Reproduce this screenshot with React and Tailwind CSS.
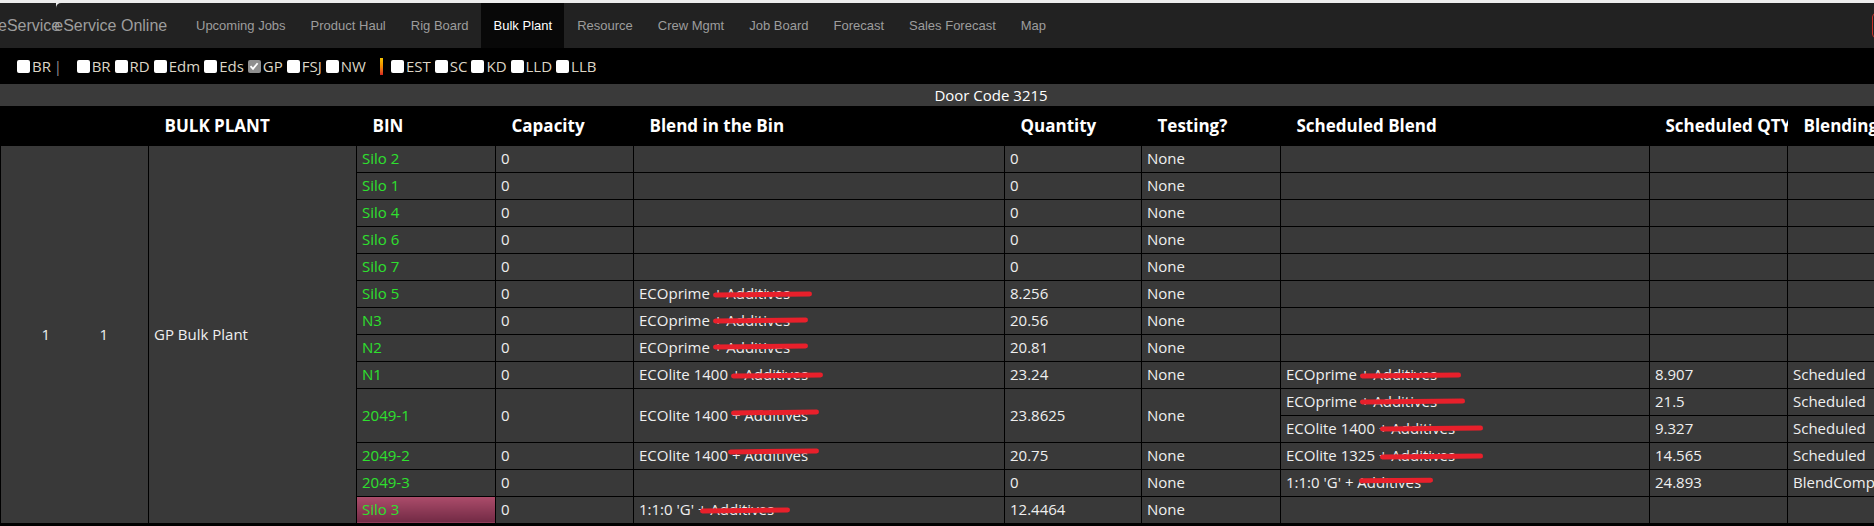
import React from 'react';

const navLinks = ['Upcoming Jobs', 'Product Haul', 'Rig Board', 'Bulk Plant', 'Resource', 'Crew Mgmt', 'Job Board', 'Forecast', 'Sales Forecast', 'Map'];

const leftDistricts = ['BR', 'RD', 'Edm', 'Eds', 'GP', 'FSJ', 'NW'];
const rightDistricts = ['EST', 'SC', 'KD', 'LLD', 'LLB'];

const headers = ['', '', 'BULK PLANT', 'BIN', 'Capacity', 'Blend in the Bin', 'Quantity', 'Testing?', 'Scheduled Blend', 'Scheduled QTY', 'Blending'];
const widths = ['w-[90px]', 'w-[58px]', 'w-[208px]', 'w-[139px]', 'w-[138px]', 'w-[371px]', 'w-[137px]', 'w-[139px]', 'w-[369px]', 'w-[138px]', 'w-[195px]'];

const rows = [
  { bin: 'Silo 2', qty: '0' },
  { bin: 'Silo 1', qty: '0' },
  { bin: 'Silo 4', qty: '0' },
  { bin: 'Silo 6', qty: '0' },
  { bin: 'Silo 7', qty: '0' },
  { bin: 'Silo 5', blend: 'ECOprime', qty: '8.256', bar: 'left-[3px] right-[-22px] top-[calc(50%-1px)]' },
  { bin: 'N3', blend: 'ECOprime', qty: '20.56', bar: 'left-[3px] right-[-18px] top-[calc(50%-2px)]' },
  { bin: 'N2', blend: 'ECOprime', qty: '20.81', bar: 'left-[3px] right-[-18px] top-[calc(50%-3px)]' },
  { bin: 'N1', blend: 'ECOlite 1400', qty: '23.24', bar: 'left-[3px] right-[-15px] top-[calc(50%-1px)]', sched: [{ blend: 'ECOprime', qty: '8.907', status: 'Scheduled', bar: 'left-[3px] right-[-24px] top-[calc(50%-1px)]' }] },
  {
    bin: '2049-1', blend: 'ECOlite 1400', qty: '23.8625', bar: 'left-[3px] right-[-11px] top-[calc(50%-5px)]',
    sched: [
      { blend: 'ECOprime', qty: '21.5', status: 'Scheduled', bar: 'left-[3px] right-[-28px] top-[calc(50%-2px)]' },
      { blend: 'ECOlite 1400', qty: '9.327', status: 'Scheduled', bar: 'left-[5px] right-[-28px] top-[calc(50%-2px)]' },
    ],
  },
  { bin: '2049-2', blend: 'ECOlite 1400', qty: '20.75', bar: 'left-[0px] right-[-11px] top-[calc(50%-6px)]', sched: [{ blend: 'ECOlite 1325', qty: '14.565', status: 'Scheduled', bar: 'left-[5px] right-[-28px] top-[calc(50%-1px)]' }] },
  { bin: '2049-3', qty: '0', sched: [{ blend: "1:1:0 'G' +", plus: true, qty: '24.893', status: 'BlendCompleted', bar: 'left-[6px] right-[-12px] top-[calc(50%-4px)]' }] },
  { bin: 'Silo 3', blend: "1:1:0 'G'", qty: '12.4464', bar: 'left-[6px] right-[-16px] top-[calc(50%-1px)]', alert: true },
];

function Box({ checked }) {
  if (checked) {
    return (
      <span className="w-[13px] h-[13px] rounded-[2px] bg-[#8e8e8e] flex items-center justify-center">
        <svg width="10" height="10" viewBox="0 0 10 10"><path d="M1.5 5.2 L4 7.8 L8.6 2.2" stroke="#fff" strokeWidth="1.8" fill="none" /></svg>
      </span>
    );
  }
  return <span className="w-[13px] h-[13px] rounded-[2px] bg-white" />;
}

function Check({ label, checked }) {
  return (
    <span className="flex items-center mr-[4px]">
      <Box checked={checked} />
      <span className="ml-[2px]">{label}</span>
    </span>
  );
}

function Redacted({ base, plus, bar }) {
  return (
    <span className="whitespace-nowrap">
      {base}
      <span className="relative">
        {plus ? ' Additives' : ' + Additives'}
        <span className={`absolute h-[5px] rounded-full bg-[#e8202b] -rotate-[0.6deg] ${bar}`} />
      </span>
    </span>
  );
}

const td = 'border border-black px-[5px] align-middle';

export default function App() {
  return (
    <div className="w-[1874px] h-[526px] bg-black overflow-hidden font-['Open_Sans',sans-serif]">
      <div className="h-[3px] bg-[#ededed]" />
      <nav className="relative h-[45px] bg-[#222222] flex items-stretch font-['Liberation_Sans',Arial,sans-serif]">
        <div className="absolute left-[56px] top-0 w-[6px] h-[5px] bg-[#ededed]" />
        <div className="absolute left-[56px] top-0 w-[6px] h-[5px] bg-[#222222] rounded-tl-[6px]" />
        <div className="relative w-[183px] flex items-center text-[16px] text-[#9d9d9d] whitespace-nowrap">
          <span className="-ml-[2px]">eService</span>
          <span className="-ml-[6px]">eService Online</span>
        </div>
        {navLinks.map((l) => (
          <div key={l} className={`pl-[13px] pr-[12px] flex items-center text-[13px] ${l === 'Bulk Plant' ? 'bg-[#080808] text-white' : 'text-[#9d9d9d]'}`}>
            {l}
          </div>
        ))}
        <div className="absolute right-[-8px] top-[10px] w-[10px] h-[25px] rounded-[4px] border border-[#c8322a]" />
      </nav>

      <div className="h-[36px] bg-black flex items-center pl-[17px] text-[15px] text-[#ddd6c6]">
        <Box />
        <span className="ml-[2px]">BR</span>
        <span className="ml-[3px] text-[#9a9a9a] text-[14px]">|</span>
        <span className="w-[15px]" />
        {leftDistricts.map((d) => <Check key={d} label={d} checked={d === 'GP'} />)}
        <span className="w-[3px] h-[17px] bg-linear-to-b from-[#f5c400] via-[#f08a00] to-[#d82020] mr-[8px] ml-[10px]" />
        {rightDistricts.map((d) => <Check key={d} label={d} />)}
      </div>

      <div className="w-[1982px]">
        <div className="h-[22px] bg-[#3a3a3a] flex items-center justify-center text-[15px] text-white">Door Code 3215</div>
        <table className="table-fixed border-collapse w-[1982px] text-[15px] text-[#efefef]">
          <colgroup>
            {widths.map((w, i) => <col key={i} className={w} />)}
          </colgroup>
          <thead>
            <tr className="h-[39px] bg-black">
              {headers.map((h, i) => (
                <th key={i} className="p-0 text-left font-bold text-[17px] text-white">
                  <div className="pl-4 overflow-hidden whitespace-nowrap">{h}</div>
                </th>
              ))}
            </tr>
          </thead>
          <tbody className="bg-[#393939]">
            {rows.map((r, i) => {
              const span = r.sched && r.sched.length > 1 ? 2 : 1;
              const first = r.sched ? r.sched[0] : null;
              const main = (
                <tr key={r.bin} className="h-[27px]">
                  {i === 0 && (
                    <>
                      <td rowSpan={14} className="border-y border-l border-black text-center">1</td>
                      <td rowSpan={14} className="border-y border-r border-black pl-[9px]">1</td>
                      <td rowSpan={14} className={td}>GP Bulk Plant</td>
                    </>
                  )}
                  <td rowSpan={span} className={`${td} text-[#2ee02e] ${r.alert ? 'bg-linear-to-b from-[#ad4d6b] to-[#722a45]' : ''}`}>{r.bin}</td>
                  <td rowSpan={span} className={td}>0</td>
                  <td rowSpan={span} className={td}>{r.blend ? <Redacted base={r.blend} bar={r.bar} /> : null}</td>
                  <td rowSpan={span} className={td}>{r.qty}</td>
                  <td rowSpan={span} className={td}>None</td>
                  <td className={td}>{first ? <Redacted base={first.blend} plus={first.plus} bar={first.bar} /> : null}</td>
                  <td className={td}>{first ? first.qty : null}</td>
                  <td className={`${td} whitespace-nowrap overflow-hidden`}>{first ? first.status : null}</td>
                </tr>
              );
              if (span === 1) return main;
              const s = r.sched[1];
              return [
                main,
                <tr key={r.bin + '-b'} className="h-[27px]">
                  <td className={td}><Redacted base={s.blend} bar={s.bar} /></td>
                  <td className={td}>{s.qty}</td>
                  <td className={td}>{s.status}</td>
                </tr>,
              ];
            })}
          </tbody>
        </table>
      </div>
    </div>
  );
}
